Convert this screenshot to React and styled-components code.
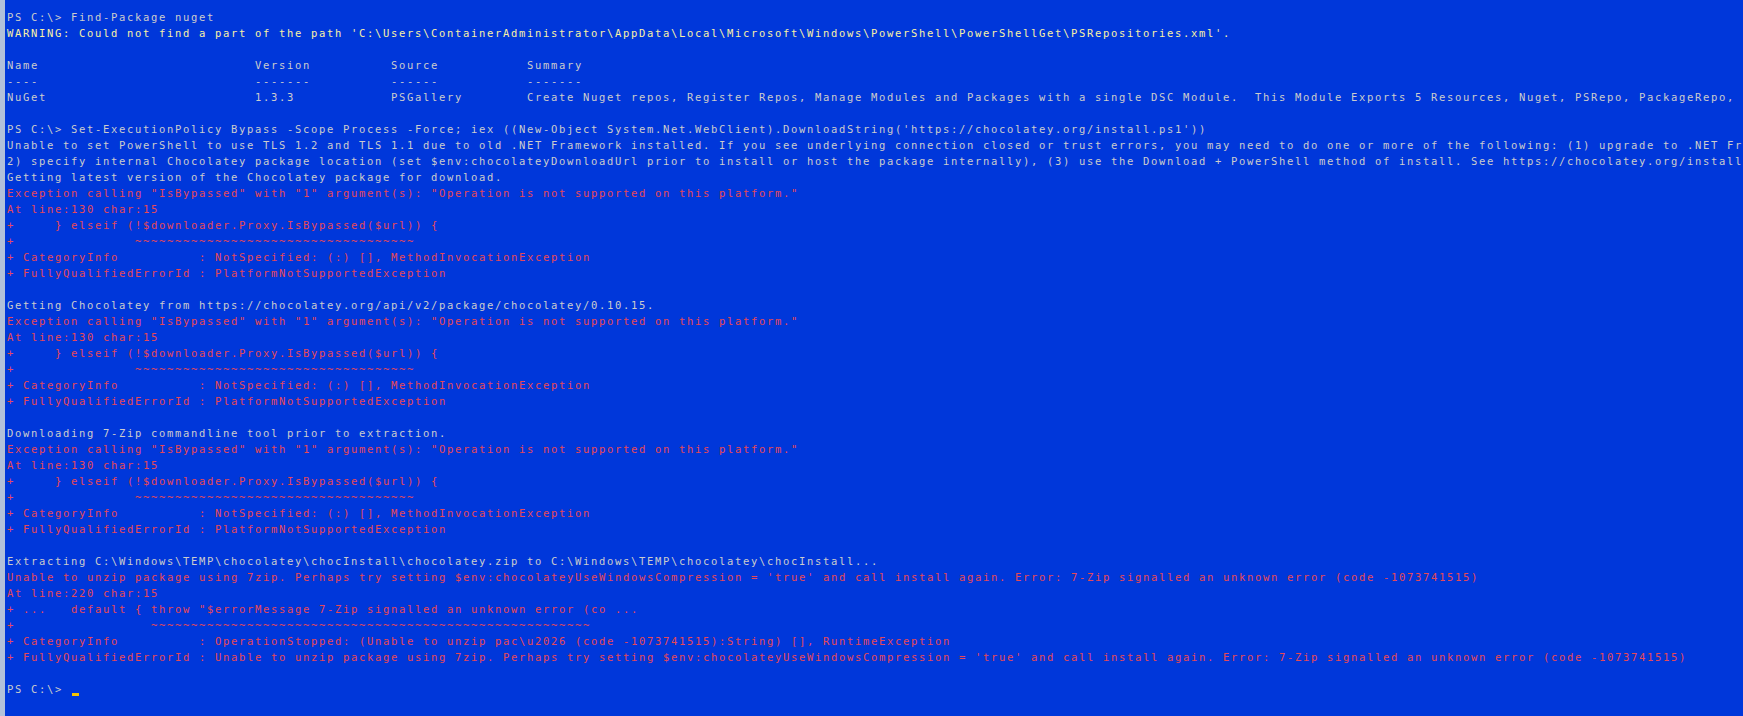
import React from 'react';
import styled, { createGlobalStyle } from 'styled-components';

const GlobalStyle = createGlobalStyle`
  html, body {
    margin: 0;
    padding: 0;
    height: 716px;
    overflow: hidden;
    background: #0037da;
  }
`;

const Window = styled.div`
  display: flex;
  width: 1743px;
  height: 716px;
  background: #0037da;
  overflow: hidden;
`;

const Edge = styled.div`
  flex: 0 0 5px;
  background: #b2c1da;
`;

const Screen = styled.div`
  flex: 1;
  min-width: 0;
  padding: 9px 0 0 2px;
  overflow: hidden;
  font-family: "DejaVu Sans Mono", "Liberation Mono", monospace;
  font-size: 10.5px;
  letter-spacing: 1.6785px;
  line-height: 16px;
`;

const tones = {
  out: '#cccccc',
  warn: '#f9f1a5',
  err: '#e74856',
};

const Line = styled.div`
  height: 16px;
  white-space: pre;
  color: ${props => tones[props.tone || 'out']};
`;

const Cursor = styled.span`
  display: inline-block;
  width: 7px;
  height: 3px;
  margin-left: 1px;
  vertical-align: -3px;
  background: #f7c300;
`;

const nsErr = [
  ['Exception calling "IsBypassed" with "1" argument(s): "Operation is not supported on this platform."', 'err'],
  ['At line:130 char:15', 'err'],
  ['+     } elseif (!$downloader.Proxy.IsBypassed($url)) {', 'err'],
  ['+               ' + '~'.repeat(35), 'err'],
  ['+ CategoryInfo          : NotSpecified: (:) [], MethodInvocationException', 'err'],
  ['+ FullyQualifiedErrorId : PlatformNotSupportedException', 'err'],
];

const lines = [
  ['PS C:\\> Find-Package nuget'],
  ["WARNING: Could not find a part of the path 'C:\\Users\\ContainerAdministrator\\AppData\\Local\\Microsoft\\Windows\\PowerShell\\PowerShellGet\\PSRepositories.xml'.", 'warn'],
  [''],
  ['Name                           Version          Source           Summary'],
  ['----                           -------          ------           -------'],
  ['NuGet                          1.3.3            PSGallery        Create Nuget repos, Register Repos, Manage Modules and Packages with a single DSC Module.  This Module Exports 5 Resources, Nuget, PSRepo, PackageRepo, PackageManagement, Module'],
  [''],
  ["PS C:\\> Set-ExecutionPolicy Bypass -Scope Process -Force; iex ((New-Object System.Net.WebClient).DownloadString('https://chocolatey.org/install.ps1'))"],
  ['Unable to set PowerShell to use TLS 1.2 and TLS 1.1 due to old .NET Framework installed. If you see underlying connection closed or trust errors, you may need to do one or more of the following: (1) upgrade to .NET Framework 4.5+ and PowerShell v3+, ('],
  ['2) specify internal Chocolatey package location (set $env:chocolateyDownloadUrl prior to install or host the package internally), (3) use the Download + PowerShell method of install. See https://chocolatey.org/install for all install options.'],
  ['Getting latest version of the Chocolatey package for download.'],
  ...nsErr,
  [''],
  ['Getting Chocolatey from https://chocolatey.org/api/v2/package/chocolatey/0.10.15.'],
  ...nsErr,
  [''],
  ['Downloading 7-Zip commandline tool prior to extraction.'],
  ...nsErr,
  [''],
  ['Extracting C:\\Windows\\TEMP\\chocolatey\\chocInstall\\chocolatey.zip to C:\\Windows\\TEMP\\chocolatey\\chocInstall...'],
  ["Unable to unzip package using 7zip. Perhaps try setting $env:chocolateyUseWindowsCompression = 'true' and call install again. Error: 7-Zip signalled an unknown error (code -1073741515)", 'err'],
  ['At line:220 char:15', 'err'],
  ['+ ...   default { throw "$errorMessage 7-Zip signalled an unknown error (co ...', 'err'],
  ['+                 ' + '~'.repeat(55), 'err'],
  ['+ CategoryInfo          : OperationStopped: (Unable to unzip pac\\u2026 (code -1073741515):String) [], RuntimeException', 'err'],
  ["+ FullyQualifiedErrorId : Unable to unzip package using 7zip. Perhaps try setting $env:chocolateyUseWindowsCompression = 'true' and call install again. Error: 7-Zip signalled an unknown error (code -1073741515)", 'err'],
  [''],
];

export default function App() {
  return (
    <>
      <GlobalStyle />
      <Window>
        <Edge />
        <Screen>
          {lines.map(([text, tone], i) => (
            <Line key={i} tone={tone}>{text}</Line>
          ))}
          <Line>PS C:\&gt; <Cursor /></Line>
        </Screen>
      </Window>
    </>
  );
}
